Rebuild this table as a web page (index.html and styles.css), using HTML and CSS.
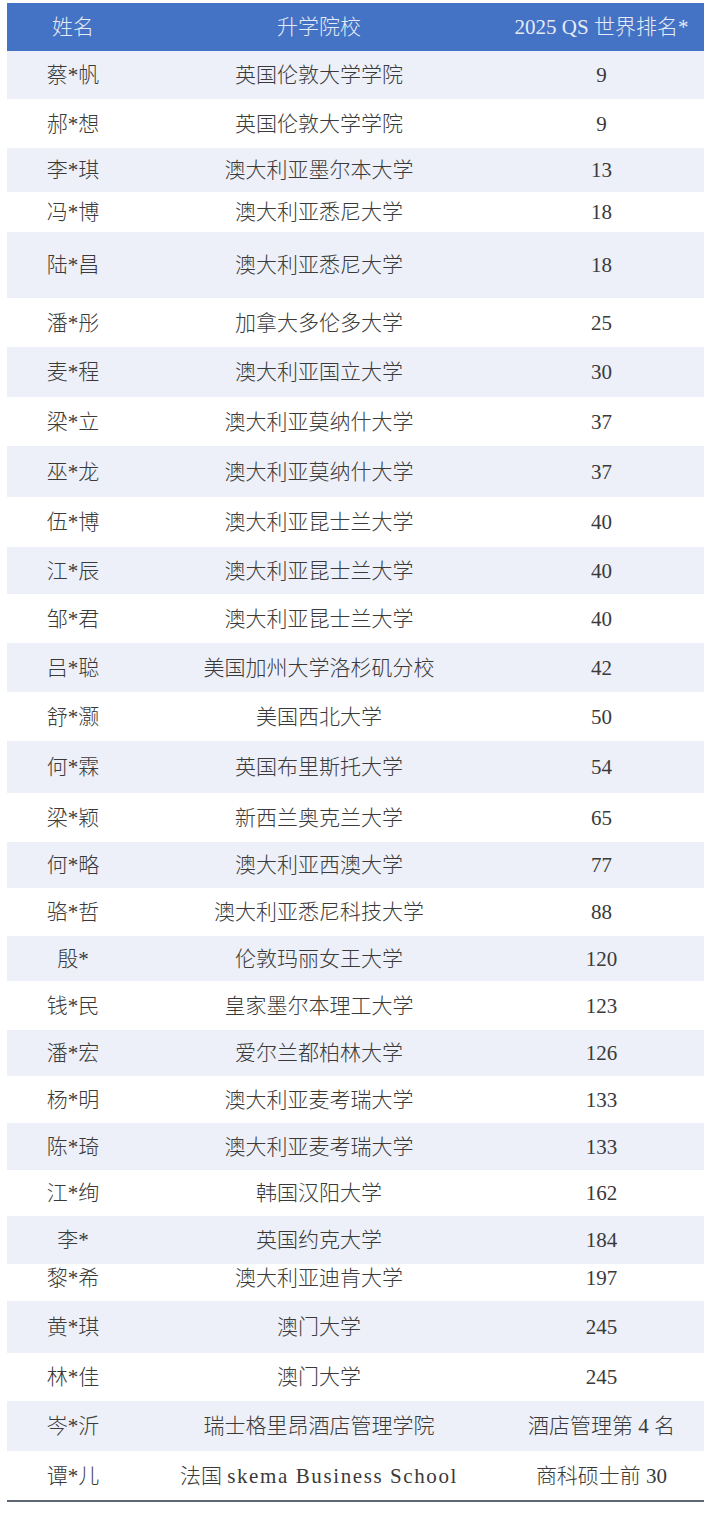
FILE: index.html
```html
<!DOCTYPE html>
<html lang="zh-CN">
<head>
<meta charset="utf-8">
<title>升学院校</title>
<link rel="stylesheet" href="styles.css">
</head>
<body>
<div class="page">
<table class="rank-table">
  <colgroup><col class="c-name"><col class="c-school"><col class="c-rank"></colgroup>
  <thead>
    <tr class="head"><th>姓名</th><th>升学院校</th><th>2025 QS 世界排名*</th></tr>
  </thead>
  <tbody>
    <tr class="alt r48"><td>蔡*帆</td><td>英国伦敦大学学院</td><td>9</td></tr>
    <tr class="r49"><td>郝*想</td><td>英国伦敦大学学院</td><td>9</td></tr>
    <tr class="alt r44"><td>李*琪</td><td>澳大利亚墨尔本大学</td><td>13</td></tr>
    <tr class="r40"><td>冯*博</td><td>澳大利亚悉尼大学</td><td>18</td></tr>
    <tr class="alt r66"><td>陆*昌</td><td>澳大利亚悉尼大学</td><td>18</td></tr>
    <tr class="r49"><td>潘*彤</td><td>加拿大多伦多大学</td><td>25</td></tr>
    <tr class="alt r50"><td>麦*程</td><td>澳大利亚国立大学</td><td>30</td></tr>
    <tr class="r49"><td>梁*立</td><td>澳大利亚莫纳什大学</td><td>37</td></tr>
    <tr class="alt r51"><td>巫*龙</td><td>澳大利亚莫纳什大学</td><td>37</td></tr>
    <tr class="r50"><td>伍*博</td><td>澳大利亚昆士兰大学</td><td>40</td></tr>
    <tr class="alt r47"><td>江*辰</td><td>澳大利亚昆士兰大学</td><td>40</td></tr>
    <tr class="r49"><td>邹*君</td><td>澳大利亚昆士兰大学</td><td>40</td></tr>
    <tr class="alt r49"><td>吕*聪</td><td>美国加州大学洛杉矶分校</td><td>42</td></tr>
    <tr class="r49"><td>舒*灏</td><td>美国西北大学</td><td>50</td></tr>
    <tr class="alt r52"><td>何*霖</td><td>英国布里斯托大学</td><td>54</td></tr>
    <tr class="r49"><td>梁*颖</td><td>新西兰奥克兰大学</td><td>65</td></tr>
    <tr class="alt r46"><td>何*略</td><td>澳大利亚西澳大学</td><td>77</td></tr>
    <tr class="r48"><td>骆*哲</td><td>澳大利亚悉尼科技大学</td><td>88</td></tr>
    <tr class="alt r45"><td>殷*</td><td>伦敦玛丽女王大学</td><td>120</td></tr>
    <tr class="r49"><td>钱*民</td><td>皇家墨尔本理工大学</td><td>123</td></tr>
    <tr class="alt r46"><td>潘*宏</td><td>爱尔兰都柏林大学</td><td>126</td></tr>
    <tr class="r47"><td>杨*明</td><td>澳大利亚麦考瑞大学</td><td>133</td></tr>
    <tr class="alt r47"><td>陈*琦</td><td>澳大利亚麦考瑞大学</td><td>133</td></tr>
    <tr class="r46"><td>江*绚</td><td>韩国汉阳大学</td><td>162</td></tr>
    <tr class="alt r48"><td>李*</td><td>英国约克大学</td><td>184</td></tr>
    <tr class="r37 tight"><td>黎*希</td><td>澳大利亚迪肯大学</td><td>197</td></tr>
    <tr class="alt r52"><td>黄*琪</td><td>澳门大学</td><td>245</td></tr>
    <tr class="r48"><td>林*佳</td><td>澳门大学</td><td>245</td></tr>
    <tr class="alt r50"><td>岑*沂</td><td>瑞士格里昂酒店管理学院</td><td>酒店管理第 4 名</td></tr>
    <tr class="r50 last"><td>谭*儿</td><td>法国 <span class="latin">skema Business School</span></td><td>商科硕士前 30</td></tr>
  </tbody>
</table>
</div>
</body>
</html>
```

FILE: styles.css
```css
html, body {
  margin: 0;
  padding: 0;
  background: #ffffff;
}

.page {
  padding: 3px 2px 0 7px;
}

.rank-table {
  width: 697px;
  border-collapse: collapse;
  table-layout: fixed;
  font-family: "Liberation Serif", "Noto Sans CJK SC", serif;
  font-size: 21px;
  font-weight: 300;
  color: #3a3a3a;
}

.c-name { width: 132px; }
.c-school { width: 360px; }
.c-rank { width: 205px; }

.rank-table th,
.rank-table td {
  padding: 0;
  text-align: center;
  vertical-align: middle;
  white-space: nowrap;
  line-height: 24px;
}

.rank-table th {
  font-weight: 300;
}

.head {
  height: 48px;
  background: #4472c4;
  color: #e4ebf7;
}

.alt { background: #edf0f8; }

.r37 { height: 37px; }
.r40 { height: 40px; }
.r44 { height: 44px; }
.r45 { height: 45px; }
.r46 { height: 46px; }
.r47 { height: 47px; }
.r48 { height: 48px; }
.r49 { height: 49px; }
.r50 { height: 50px; }
.r51 { height: 51px; }
.r52 { height: 52px; }
.r66 { height: 66px; }

.tight td { vertical-align: top; padding-top: 2px; }

.last td { border-bottom: 2px solid #5f6673; }

.latin { letter-spacing: 1.6px; }
```
